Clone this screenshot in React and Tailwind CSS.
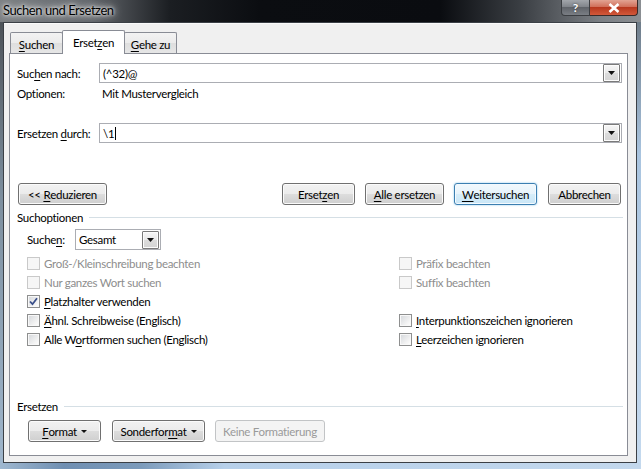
import React from "react";

const U = ({ children }) => (
  <span className="underline decoration-[1px] underline-offset-[2px]">{children}</span>
);

const BTN =
  "border-[#707070] bg-[linear-gradient(#f2f2f2,#ebebeb_50%,#dddddd_50%,#cfcfcf)] shadow-[inset_0_0_0_1px_#fbfbfb]";

function Btn({ children, className = "", kind = "normal" }) {
  const look =
    kind === "default"
      ? "border-[#3c7fb1] bg-[linear-gradient(#f2f9fd,#e6f3fb_50%,#d6edf9_50%,#c9e6f7)] shadow-[inset_0_0_0_1px_#f4fafe,0_0_2px_#7fc3ea]"
      : kind === "disabled"
      ? "border-[#c2c4c6] bg-[#f4f4f4] text-[#9a9a9a]"
      : BTN;
  return (
    <div
      className={`h-[22px] rounded-[3px] border flex items-center justify-center whitespace-nowrap ${look} ${className}`}
    >
      {children}
    </div>
  );
}

function Arrow({ className = "" }) {
  return (
    <div
      className={`w-[17px] h-[18px] border border-[#7a7a7a] rounded-[1px] bg-[linear-gradient(#f6f6f6,#e9e9e9_50%,#dcdcdc_50%,#d4d4d4)] shadow-[inset_0_0_0_1px_#fcfcfc] flex items-center justify-center ${className}`}
    >
      <svg width="7" height="4" viewBox="0 0 7 4">
        <path d="M0 0h7L3.5 4z" fill="#111" />
      </svg>
    </div>
  );
}

function Check({ label, checked, disabled }) {
  return (
    <div className="h-[19px] flex items-center whitespace-nowrap">
      <div
        className={`w-[13px] h-[13px] border flex items-center justify-center ${
          disabled
            ? "border-[#c9c9c9] bg-[#f6f6f6]"
            : "border-[#8e8f8f] bg-[linear-gradient(135deg,#d3d6da,#f4f4f4_70%,#ffffff)] shadow-[inset_0_0_0_1px_#f8f8f8]"
        }`}
      >
        {checked && (
          <svg width="9" height="9" viewBox="0 0 9 9">
            <path
              d="M1 4.5 L3.5 7.2 L8 1.2"
              stroke="#3a4f8a"
              strokeWidth="1.8"
              fill="none"
            />
          </svg>
        )}
      </div>
      <span className={`ml-[4px] ${disabled ? "text-[#8d8d8d]" : "text-black"}`}>{label}</span>
    </div>
  );
}

export default function App() {
  return (
    <div className="w-[641px] h-[469px] overflow-hidden flex flex-col bg-[#b4cde6] font-['Lato',sans-serif] text-[11.5px] tracking-[-0.3px] leading-[15px] text-black">
      {/* Title bar */}
      <div className="h-[22px] flex items-start bg-[linear-gradient(to_right,#7b7f83_0px,#63676c_90px,#1b1e22_170px,#0b0d11_260px,#0a0c10_440px,#3a3e43_520px,#7b7f84_600px,#8b8f93_641px)]">
        <div className="h-[21px] flex items-center pl-[3px] text-[13px] tracking-[-0.45px] text-black whitespace-nowrap [text-shadow:0_0_6px_#e8e8e8,0_0_10px_#d8d8d8,0_0_3px_#ffffff]">
          Suchen und Ersetzen
        </div>
        <div className="ml-auto mr-[3px] flex h-[16px] tracking-normal">
          <div className="w-[29px] h-[16px] rounded-bl-[4px] border border-t-0 border-[#3b3e42] bg-[linear-gradient(#a2a6ab,#7d8187_50%,#60646a_50%,#7a7e84)] flex items-center justify-center text-white font-bold text-[12px] [text-shadow:0_0_2px_#333]">
            ?
          </div>
          <div className="w-[48px] h-[16px] rounded-br-[4px] border border-t-0 border-l-0 border-[#3b2a28] bg-[linear-gradient(#e2a393,#cf6a54_50%,#b8381f_50%,#d2593a)] flex items-center justify-center">
            <svg width="12" height="10" viewBox="0 0 12 10">
              <path d="M1.5 1 L10.5 9 M10.5 1 L1.5 9" stroke="#fff" strokeWidth="2.6" />
            </svg>
          </div>
        </div>
      </div>

      {/* Body */}
      <div className="flex h-[441px]">
        <div className="w-[3px] bg-[linear-gradient(#4d5359,#7d8f9f_40%,#9fb6cc)]" />
        <div className="w-[634px] border border-[#3b4046] bg-[#f0f0f0] flex flex-col pt-[7px] pb-[6px] shadow-[inset_0_1px_0_#fafafa]">
          {/* Tabs */}
          <div className="h-[23px] flex items-end pl-[6px] relative z-10">
            <div className="w-[53px] h-[21px] border border-b-0 border-[#898c95] rounded-t-[2px] bg-[linear-gradient(#f3f3f3,#ebebeb_50%,#dedede_50%,#e6e6e6)] flex items-center justify-center pt-[2px]">
              <U>S</U>uchen
            </div>
            <div className="w-[63px] h-[24px] -ml-px -mb-px border border-b-0 border-[#898c95] rounded-t-[2px] bg-white flex items-center justify-center">
              Erset<U>z</U>en
            </div>
            <div className="w-[53px] h-[21px] -ml-px border border-b-0 border-[#898c95] rounded-t-[2px] bg-[linear-gradient(#f3f3f3,#ebebeb_50%,#dedede_50%,#e6e6e6)] flex items-center justify-center pt-[2px]">
              <U>G</U>ehe zu
            </div>
          </div>

          {/* Panel */}
          <div className="ml-[5px] w-[619px] h-[403px] border border-[#898c95] bg-white flex flex-col pl-[7px] pr-[5px] whitespace-nowrap">
            <div className="mt-[9px] flex h-[20px]">
              <div className="w-[82px] flex items-center">
                Suc<U>h</U>en nach:
              </div>
              <div className="flex-1 border border-[#abadb3] flex items-center pl-[3px] pr-[1px]">
                <span className="flex-1">(^32)@</span>
                <Arrow />
              </div>
            </div>
            <div className="flex h-[20px] items-center">
              <div className="w-[85px]">Optionen:</div>
              <div>Mit Mustervergleich</div>
            </div>
            <div className="mt-[20px] flex h-[20px]">
              <div className="w-[82px] flex items-center">
                Ersetzen&nbsp;<U>d</U>urch:
              </div>
              <div className="flex-1 border border-[#abadb3] flex items-center pl-[3px] pr-[1px]">
                <span className="flex-1 flex items-center">
                  \1<span className="w-px h-[13px] bg-black ml-px" />
                </span>
                <Arrow />
              </div>
            </div>

            {/* Buttons */}
            <div className="mt-[40px] flex h-[22px] pl-px pr-px">
              <Btn className="w-[89px]">
                &lt;&lt;&nbsp;<U>R</U>eduzieren
              </Btn>
              <Btn className="w-[73px] ml-auto">
                Erset<U>z</U>en
              </Btn>
              <Btn className="w-[79px] ml-[10px]">
                <U>A</U>lle ersetzen
              </Btn>
              <Btn kind="default" className="w-[83px] ml-[10px]">
                <U>W</U>eitersuchen
              </Btn>
              <Btn className="w-[73px] ml-[11px]">Abbrechen</Btn>
            </div>

            {/* Suchoptionen header */}
            <div className="h-[24px] flex items-center">
              <span>Suchoptionen</span>
              <div className="flex-1 ml-[6px] h-px bg-[#d5dfe5] mr-[-1px]" />
            </div>

            <div className="flex h-[21px] pl-[10px]">
              <div className="w-[48px] flex items-center">
                Suche<U>n</U>:
              </div>
              <div className="w-[86px] border border-[#abadb3] flex items-center pl-[3px] pr-[1px]">
                <span className="flex-1">Gesamt</span>
                <Arrow />
              </div>
            </div>

            <div className="mt-[4px] pl-[10px] grid grid-cols-[372px_1fr]">
              <div className="flex flex-col">
                <Check disabled label="Groß-/Kleinschreibung beachten" />
                <Check disabled label="Nur ganzes Wort suchen" />
                <Check checked label={<><U>P</U>latzhalter verwenden</>} />
                <Check label={<><U>Ä</U>hnl. Schreibweise (Englisch)</>} />
                <Check label={<>Alle W<U>o</U>rtformen suchen (Englisch)</>} />
              </div>
              <div className="flex flex-col">
                <Check disabled label="Präfix beachten" />
                <Check disabled label="Suffix beachten" />
                <div className="h-[19px]" />
                <Check label={<><U>I</U>nterpunktionszeichen ignorieren</>} />
                <Check label={<><U>L</U>eerzeichen ignorieren</>} />
              </div>
            </div>

            {/* Ersetzen header */}
            <div className="mt-[47px] h-[20px] flex items-center">
              <span>Ersetzen</span>
              <div className="flex-1 ml-[6px] h-px bg-[#d5dfe5] mr-[-1px]" />
            </div>

            <div className="mt-[4px] flex pl-[11px]">
              <Btn className="w-[73px]">
                <U>F</U>ormat
                <svg width="6" height="3" viewBox="0 0 6 3" className="ml-[4px]">
                  <path d="M0 0h6L3 3z" fill="#111" />
                </svg>
              </Btn>
              <Btn className="w-[93px] ml-[11px]">
                Sonderfor<U>m</U>at
                <svg width="6" height="3" viewBox="0 0 6 3" className="ml-[4px]">
                  <path d="M0 0h6L3 3z" fill="#111" />
                </svg>
              </Btn>
              <Btn kind="disabled" className="w-[110px] ml-[10px]">
                Keine Formatierung
              </Btn>
            </div>
          </div>
        </div>
        <div className="w-[4px] bg-[linear-gradient(#6f7d8a,#a9c4df_30%,#c4d9ee)]" />
      </div>
      <div className="h-[6px] bg-[linear-gradient(to_right,#9fb8d0,#6f8fb2_10%,#7c9bbb_22%,#b7d0ea_35%,#c3d8ed)]" />
    </div>
  );
}
